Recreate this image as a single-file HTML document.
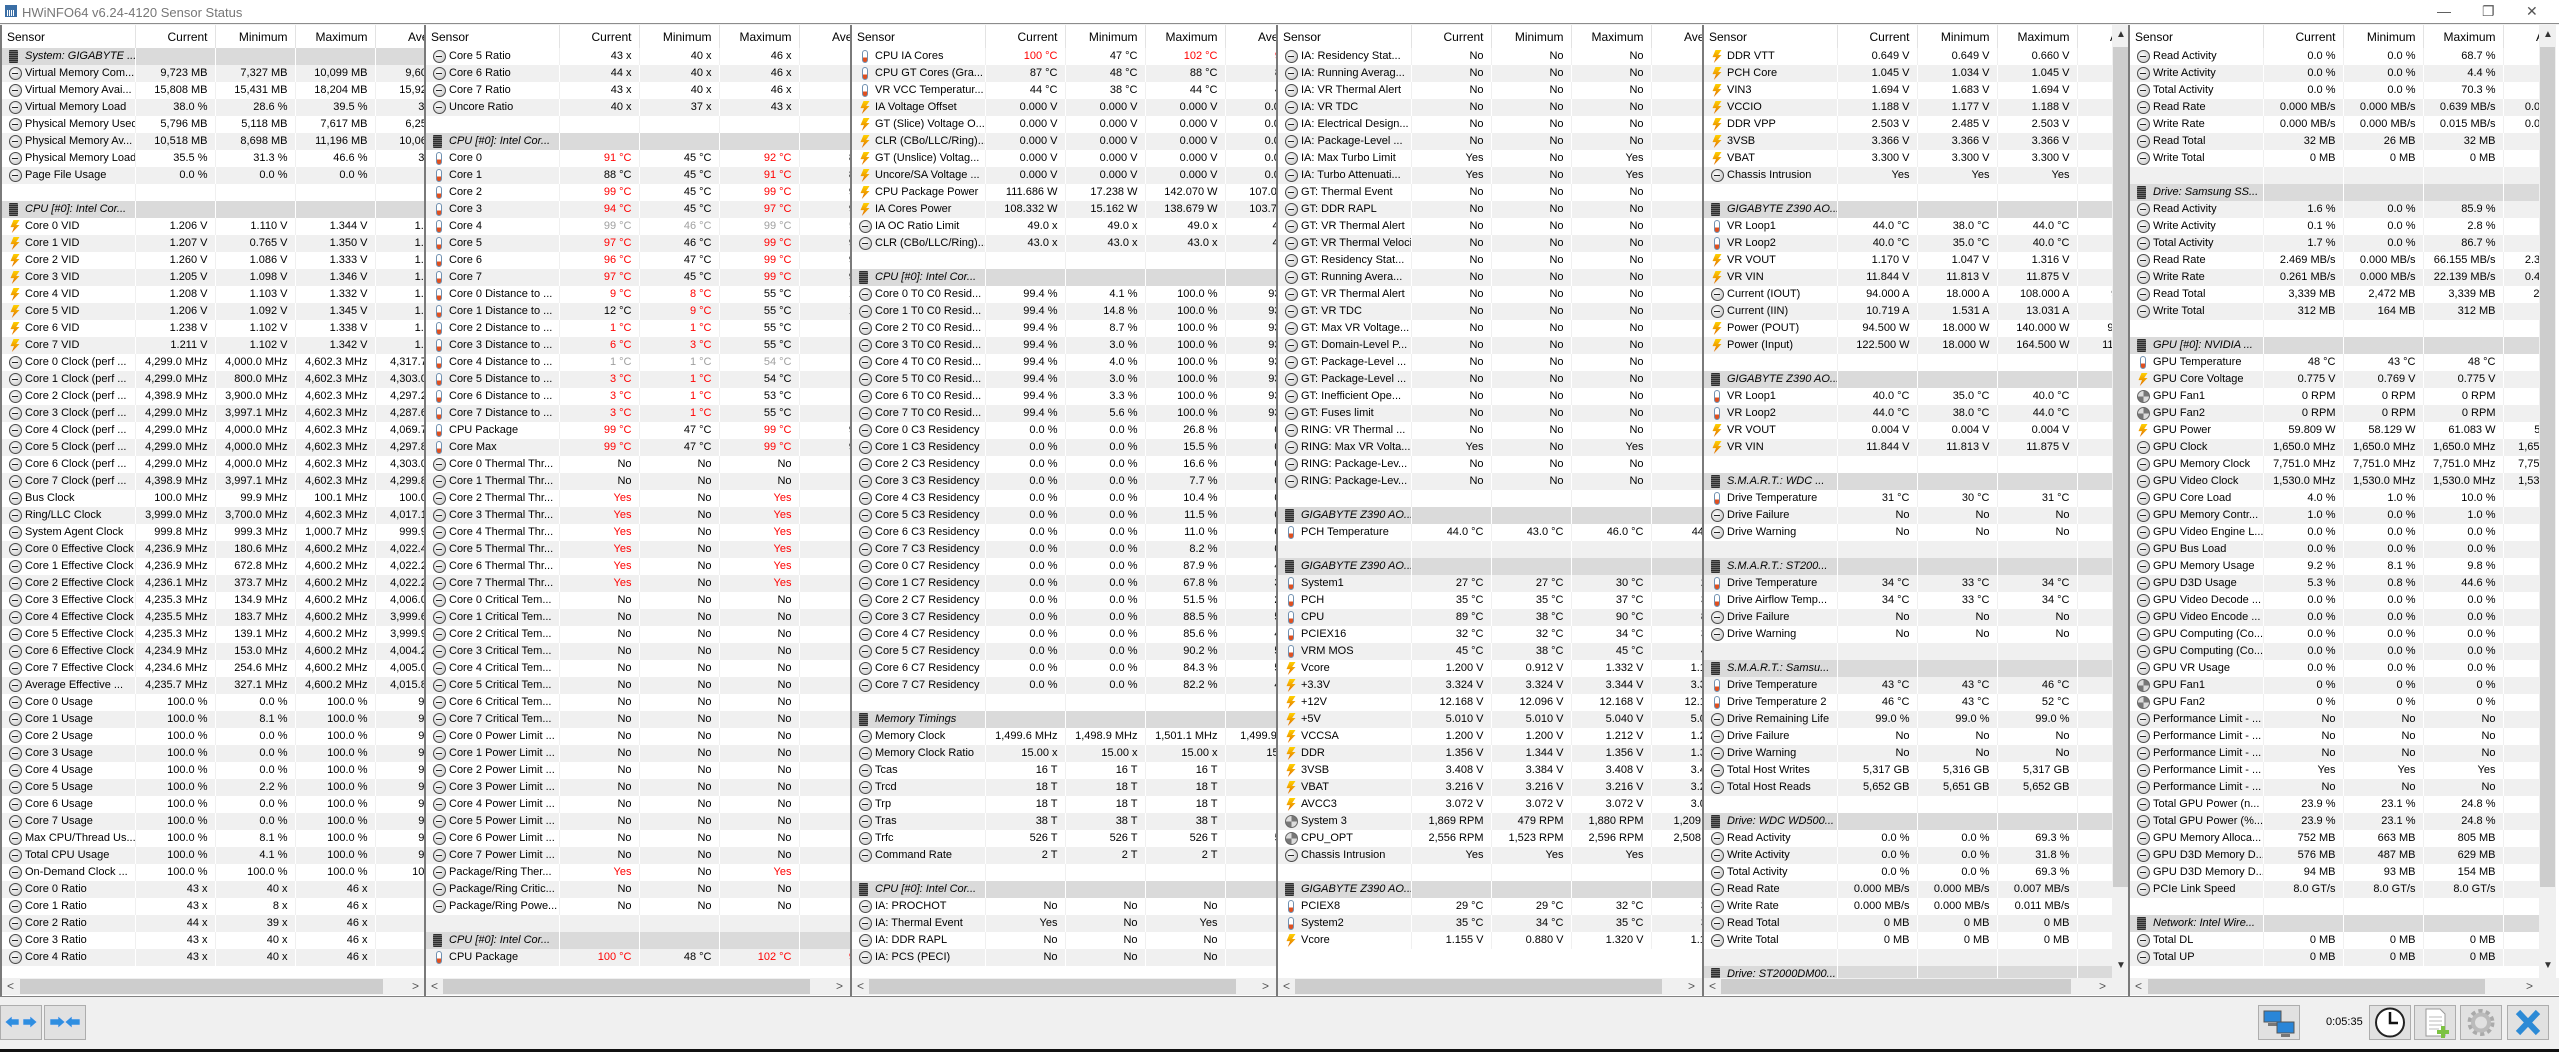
<!DOCTYPE html>
<html><head><meta charset="utf-8"><style>
*{margin:0;padding:0;box-sizing:border-box}
body{width:2559px;height:1052px;overflow:hidden;background:#f0f0f0;font-family:"Liberation Sans",Tahoma,sans-serif;font-size:11px;color:#000;position:relative}
.tb{position:absolute;left:0;top:0;width:2559px;height:24px;background:#fff;border-bottom:1px solid #8c8c8c}
.tb .ti{position:absolute;left:22px;top:5px;font-size:13px;color:#777}
.tb .ic{position:absolute;left:5px;top:5px;width:12px;height:12px;background:#3a6ea5}
.tb .ic:after{content:"";position:absolute;left:2px;top:5px;width:8px;height:6px;background:repeating-linear-gradient(90deg,#fff 0 1px,#3a6ea5 1px 2px)}
.wc{position:absolute;top:3px;font-size:14px;color:#555}
.pane{position:absolute;top:25px;height:971px;background:#fff;overflow:hidden;border-left:2px solid #7a7a7a}
.pane:first-of-type{border-left:0}
.cl{position:absolute;top:0;left:0;height:953px;overflow:hidden}
table{border-collapse:collapse;table-layout:fixed;width:458px}
col:nth-child(5){width:85px!important}
th{height:23px;font-weight:normal;text-align:right;padding-right:7px;border-right:1px solid #e3e3e3;white-space:nowrap;overflow:hidden;background:#fff;font-size:12px}
th:first-child{text-align:left;padding-left:5px}
td{height:17px;text-align:right;padding-right:7px;white-space:nowrap;overflow:hidden;border-right:1px solid #f0f0f0;line-height:17px}
td:first-child{text-align:left;padding-left:23px;position:relative;padding-right:0}
tbody tr:nth-child(even) td{background:#f0f0f0;border-right-color:#fff}
tr.h td{background:#dadada!important;border-right-color:#fff;font-style:italic}
td.r{color:#f00}td.d{color:#a0a0a0}
i{position:absolute;left:7px;top:2px;width:13px;height:13px;display:block}
i.c{border-radius:50%;border:1px solid #4a4a4a;background:radial-gradient(circle at 40% 40%,#fff,#bdbdbd)}
i.c:after{content:"";position:absolute;left:2px;top:5px;width:6px;height:1px;background:#222}
i.v{left:8px;width:10px;background:linear-gradient(#ffd200,#e06a00);clip-path:polygon(35% 0,95% 0,62% 38%,95% 38%,18% 100%,40% 55%,5% 55%)}
i.t{left:10px;width:6px;border:1px solid #7090b0;border-radius:3px;background:linear-gradient(to top,#e05020 40%,#fff 40%)}
i.h{left:7px;width:9px;background:repeating-linear-gradient(#2e2e2e 0 1px,#6a6a6a 1px 2px);border-radius:1px}
i.f{border-radius:50%;background:conic-gradient(#777 0 25%,#ddd 0 50%,#777 0 75%,#ddd 0);border:1px solid #666}
.hs{position:absolute;left:0;top:953px;height:17px;background:#f0f0f0}
.hs .th{position:absolute;top:1px;height:15px;background:#cdcdcd}
.hs .a{position:absolute;top:1px;font-size:12px;color:#555}
.vs{position:absolute;top:0;width:17px;height:953px;background:#f0f0f0}
.vs .th{position:absolute;left:1px;width:15px;top:22px;height:840px;background:#cdcdcd}
.vs .a{position:absolute;left:4px;font-size:10px;color:#333}
.bot{position:absolute;left:0;top:996px;width:2559px;height:53px;background:#f0f0f0;border-top:1px solid #828282}
.btn{position:absolute;top:8px;width:42px;height:35px;border:1px solid #adadad;background:#e1e1e1}
.blk{position:absolute;left:0;top:1049px;width:2559px;height:3px;background:#111}
</style></head><body>
<div class="tb"><div class="ic"></div><div class="ti">HWiNFO64 v6.24-4120 Sensor Status</div>
<div class="wc" style="left:2437px">—</div><div class="wc" style="left:2482px">❐</div><div class="wc" style="left:2526px">✕</div></div>

<!-- PANE 1 -->
<div class="pane" style="left:0;width:424px"><div class="cl" style="width:424px"><table><colgroup><col style="width:133px"><col style="width:80px"><col style="width:80px"><col style="width:80px"><col style="width:80px"></colgroup>
<thead><tr><th>Sensor<th>Current<th>Minimum<th>Maximum<th>Average</thead><tbody>
<tr class=h><td><i class=h></i>System: GIGABYTE ...<td><td><td><td>
<tr><td><i class=c></i>Virtual Memory Com...<td>9,723 MB<td>7,327 MB<td>10,099 MB<td>9,603 MB
<tr><td><i class=c></i>Virtual Memory Avai...<td>15,808 MB<td>15,431 MB<td>18,204 MB<td>15,928 MB
<tr><td><i class=c></i>Virtual Memory Load<td>38.0 %<td>28.6 %<td>39.5 %<td>37.3 %
<tr><td><i class=c></i>Physical Memory Used<td>5,796 MB<td>5,118 MB<td>7,617 MB<td>6,253 MB
<tr><td><i class=c></i>Physical Memory Av...<td>10,518 MB<td>8,698 MB<td>11,196 MB<td>10,061 MB
<tr><td><i class=c></i>Physical Memory Load<td>35.5 %<td>31.3 %<td>46.6 %<td>38.3 %
<tr><td><i class=c></i>Page File Usage<td>0.0 %<td>0.0 %<td>0.0 %<td>0.0 %
<tr><td>&nbsp;<td><td><td><td>
<tr class=h><td><i class=h></i>CPU [#0]: Intel Cor...<td><td><td><td>
<tr><td><i class=v></i>Core 0 VID<td>1.206 V<td>1.110 V<td>1.344 V<td>1.224 V
<tr><td><i class=v></i>Core 1 VID<td>1.207 V<td>0.765 V<td>1.350 V<td>1.221 V
<tr><td><i class=v></i>Core 2 VID<td>1.260 V<td>1.086 V<td>1.333 V<td>1.225 V
<tr><td><i class=v></i>Core 3 VID<td>1.205 V<td>1.098 V<td>1.346 V<td>1.221 V
<tr><td><i class=v></i>Core 4 VID<td>1.208 V<td>1.103 V<td>1.332 V<td>1.222 V
<tr><td><i class=v></i>Core 5 VID<td>1.206 V<td>1.092 V<td>1.345 V<td>1.222 V
<tr><td><i class=v></i>Core 6 VID<td>1.238 V<td>1.102 V<td>1.338 V<td>1.224 V
<tr><td><i class=v></i>Core 7 VID<td>1.211 V<td>1.102 V<td>1.342 V<td>1.223 V
<tr><td><i class=c></i>Core 0 Clock (perf ...<td>4,299.0 MHz<td>4,000.0 MHz<td>4,602.3 MHz<td>4,317.7 MHz
<tr><td><i class=c></i>Core 1 Clock (perf ...<td>4,299.0 MHz<td>800.0 MHz<td>4,602.3 MHz<td>4,303.0 MHz
<tr><td><i class=c></i>Core 2 Clock (perf ...<td>4,398.9 MHz<td>3,900.0 MHz<td>4,602.3 MHz<td>4,297.2 MHz
<tr><td><i class=c></i>Core 3 Clock (perf ...<td>4,299.0 MHz<td>3,997.1 MHz<td>4,602.3 MHz<td>4,287.6 MHz
<tr><td><i class=c></i>Core 4 Clock (perf ...<td>4,299.0 MHz<td>4,000.0 MHz<td>4,602.3 MHz<td>4,069.7 MHz
<tr><td><i class=c></i>Core 5 Clock (perf ...<td>4,299.0 MHz<td>4,000.0 MHz<td>4,602.3 MHz<td>4,297.8 MHz
<tr><td><i class=c></i>Core 6 Clock (perf ...<td>4,299.0 MHz<td>4,000.0 MHz<td>4,602.3 MHz<td>4,303.0 MHz
<tr><td><i class=c></i>Core 7 Clock (perf ...<td>4,398.9 MHz<td>3,997.1 MHz<td>4,602.3 MHz<td>4,299.8 MHz
<tr><td><i class=c></i>Bus Clock<td>100.0 MHz<td>99.9 MHz<td>100.1 MHz<td>100.0 MHz
<tr><td><i class=c></i>Ring/LLC Clock<td>3,999.0 MHz<td>3,700.0 MHz<td>4,602.3 MHz<td>4,017.1 MHz
<tr><td><i class=c></i>System Agent Clock<td>999.8 MHz<td>999.3 MHz<td>1,000.7 MHz<td>999.9 MHz
<tr><td><i class=c></i>Core 0 Effective Clock<td>4,236.9 MHz<td>180.6 MHz<td>4,600.2 MHz<td>4,022.4 MHz
<tr><td><i class=c></i>Core 1 Effective Clock<td>4,236.9 MHz<td>672.8 MHz<td>4,600.2 MHz<td>4,022.2 MHz
<tr><td><i class=c></i>Core 2 Effective Clock<td>4,236.1 MHz<td>373.7 MHz<td>4,600.2 MHz<td>4,022.2 MHz
<tr><td><i class=c></i>Core 3 Effective Clock<td>4,235.3 MHz<td>134.9 MHz<td>4,600.2 MHz<td>4,006.0 MHz
<tr><td><i class=c></i>Core 4 Effective Clock<td>4,235.5 MHz<td>183.7 MHz<td>4,600.2 MHz<td>3,999.6 MHz
<tr><td><i class=c></i>Core 5 Effective Clock<td>4,235.3 MHz<td>139.1 MHz<td>4,600.2 MHz<td>3,999.9 MHz
<tr><td><i class=c></i>Core 6 Effective Clock<td>4,234.9 MHz<td>153.0 MHz<td>4,600.2 MHz<td>4,004.2 MHz
<tr><td><i class=c></i>Core 7 Effective Clock<td>4,234.6 MHz<td>254.6 MHz<td>4,600.2 MHz<td>4,005.0 MHz
<tr><td><i class=c></i>Average Effective ...<td>4,235.7 MHz<td>327.1 MHz<td>4,600.2 MHz<td>4,015.8 MHz
<tr><td><i class=c></i>Core 0 Usage<td>100.0 %<td>0.0 %<td>100.0 %<td>95.1 %
<tr><td><i class=c></i>Core 1 Usage<td>100.0 %<td>8.1 %<td>100.0 %<td>95.0 %
<tr><td><i class=c></i>Core 2 Usage<td>100.0 %<td>0.0 %<td>100.0 %<td>93.8 %
<tr><td><i class=c></i>Core 3 Usage<td>100.0 %<td>0.0 %<td>100.0 %<td>94.0 %
<tr><td><i class=c></i>Core 4 Usage<td>100.0 %<td>0.0 %<td>100.0 %<td>93.5 %
<tr><td><i class=c></i>Core 5 Usage<td>100.0 %<td>2.2 %<td>100.0 %<td>93.6 %
<tr><td><i class=c></i>Core 6 Usage<td>100.0 %<td>0.0 %<td>100.0 %<td>94.0 %
<tr><td><i class=c></i>Core 7 Usage<td>100.0 %<td>0.0 %<td>100.0 %<td>94.1 %
<tr><td><i class=c></i>Max CPU/Thread Us...<td>100.0 %<td>8.1 %<td>100.0 %<td>95.9 %
<tr><td><i class=c></i>Total CPU Usage<td>100.0 %<td>4.1 %<td>100.0 %<td>94.0 %
<tr><td><i class=c></i>On-Demand Clock ...<td>100.0 %<td>100.0 %<td>100.0 %<td>100.0 %
<tr><td><i class=c></i>Core 0 Ratio<td>43 x<td>40 x<td>46 x<td>
<tr><td><i class=c></i>Core 1 Ratio<td>43 x<td>8 x<td>46 x<td>
<tr><td><i class=c></i>Core 2 Ratio<td>44 x<td>39 x<td>46 x<td>
<tr><td><i class=c></i>Core 3 Ratio<td>43 x<td>40 x<td>46 x<td>
<tr><td><i class=c></i>Core 4 Ratio<td>43 x<td>40 x<td>46 x<td>
</tbody></table></div>
<div class="hs" style="width:424px"><span class="a" style="left:5px">&lt;</span><div class="th" style="left:18px;width:363px"></div><span class="a" style="left:410px">&gt;</span></div></div>

<!-- PANE 2 -->
<div class="pane" style="left:424px;width:426px"><div class="cl" style="width:424px"><table><colgroup><col style="width:133px"><col style="width:80px"><col style="width:80px"><col style="width:80px"><col style="width:80px"></colgroup>
<thead><tr><th>Sensor<th>Current<th>Minimum<th>Maximum<th>Average</thead><tbody>
<tr><td><i class=c></i>Core 5 Ratio<td>43 x<td>40 x<td>46 x<td>
<tr><td><i class=c></i>Core 6 Ratio<td>44 x<td>40 x<td>46 x<td>
<tr><td><i class=c></i>Core 7 Ratio<td>43 x<td>40 x<td>46 x<td>
<tr><td><i class=c></i>Uncore Ratio<td>40 x<td>37 x<td>43 x<td>
<tr><td>&nbsp;<td><td><td><td>
<tr class=h><td><i class=h></i>CPU [#0]: Intel Cor...<td><td><td><td>
<tr><td><i class=t></i>Core 0<td class=r>91 °C<td>45 °C<td class=r>92 °C<td>87 °C
<tr><td><i class=t></i>Core 1<td>88 °C<td>45 °C<td class=r>91 °C<td>85 °C
<tr><td><i class=t></i>Core 2<td class=r>99 °C<td>45 °C<td class=r>99 °C<td>95 °C
<tr><td><i class=t></i>Core 3<td class=r>94 °C<td>45 °C<td class=r>97 °C<td>91 °C
<tr><td><i class=t></i>Core 4<td class=d>99 °C<td class=d>46 °C<td class=d>99 °C<td class=d>95 °C
<tr><td><i class=t></i>Core 5<td class=r>97 °C<td>46 °C<td class=r>99 °C<td>94 °C
<tr><td><i class=t></i>Core 6<td class=r>96 °C<td>47 °C<td class=r>99 °C<td>93 °C
<tr><td><i class=t></i>Core 7<td class=r>97 °C<td>45 °C<td class=r>99 °C<td>94 °C
<tr><td><i class=t></i>Core 0 Distance to ...<td class=r>9 °C<td class=r>8 °C<td>55 °C<td>13 °C
<tr><td><i class=t></i>Core 1 Distance to ...<td>12 °C<td class=r>9 °C<td>55 °C<td>15 °C
<tr><td><i class=t></i>Core 2 Distance to ...<td class=r>1 °C<td class=r>1 °C<td>55 °C<td>5 °C
<tr><td><i class=t></i>Core 3 Distance to ...<td class=r>6 °C<td class=r>3 °C<td>55 °C<td>9 °C
<tr><td><i class=t></i>Core 4 Distance to ...<td class=d>1 °C<td class=d>1 °C<td class=d>54 °C<td class=d>5 °C
<tr><td><i class=t></i>Core 5 Distance to ...<td class=r>3 °C<td class=r>1 °C<td>54 °C<td>6 °C
<tr><td><i class=t></i>Core 6 Distance to ...<td class=r>3 °C<td class=r>1 °C<td>53 °C<td>7 °C
<tr><td><i class=t></i>Core 7 Distance to ...<td class=r>3 °C<td class=r>1 °C<td>55 °C<td>6 °C
<tr><td><i class=t></i>CPU Package<td class=r>99 °C<td>47 °C<td class=r>99 °C<td>95 °C
<tr><td><i class=t></i>Core Max<td class=r>99 °C<td>47 °C<td class=r>99 °C<td>95 °C
<tr><td><i class=c></i>Core 0 Thermal Thr...<td>No<td>No<td>No<td>
<tr><td><i class=c></i>Core 1 Thermal Thr...<td>No<td>No<td>No<td>
<tr><td><i class=c></i>Core 2 Thermal Thr...<td class=r>Yes<td>No<td class=r>Yes<td>
<tr><td><i class=c></i>Core 3 Thermal Thr...<td class=r>Yes<td>No<td class=r>Yes<td>
<tr><td><i class=c></i>Core 4 Thermal Thr...<td class=r>Yes<td>No<td class=r>Yes<td>
<tr><td><i class=c></i>Core 5 Thermal Thr...<td class=r>Yes<td>No<td class=r>Yes<td>
<tr><td><i class=c></i>Core 6 Thermal Thr...<td class=r>Yes<td>No<td class=r>Yes<td>
<tr><td><i class=c></i>Core 7 Thermal Thr...<td class=r>Yes<td>No<td class=r>Yes<td>
<tr><td><i class=c></i>Core 0 Critical Tem...<td>No<td>No<td>No<td>
<tr><td><i class=c></i>Core 1 Critical Tem...<td>No<td>No<td>No<td>
<tr><td><i class=c></i>Core 2 Critical Tem...<td>No<td>No<td>No<td>
<tr><td><i class=c></i>Core 3 Critical Tem...<td>No<td>No<td>No<td>
<tr><td><i class=c></i>Core 4 Critical Tem...<td>No<td>No<td>No<td>
<tr><td><i class=c></i>Core 5 Critical Tem...<td>No<td>No<td>No<td>
<tr><td><i class=c></i>Core 6 Critical Tem...<td>No<td>No<td>No<td>
<tr><td><i class=c></i>Core 7 Critical Tem...<td>No<td>No<td>No<td>
<tr><td><i class=c></i>Core 0 Power Limit ...<td>No<td>No<td>No<td>
<tr><td><i class=c></i>Core 1 Power Limit ...<td>No<td>No<td>No<td>
<tr><td><i class=c></i>Core 2 Power Limit ...<td>No<td>No<td>No<td>
<tr><td><i class=c></i>Core 3 Power Limit ...<td>No<td>No<td>No<td>
<tr><td><i class=c></i>Core 4 Power Limit ...<td>No<td>No<td>No<td>
<tr><td><i class=c></i>Core 5 Power Limit ...<td>No<td>No<td>No<td>
<tr><td><i class=c></i>Core 6 Power Limit ...<td>No<td>No<td>No<td>
<tr><td><i class=c></i>Core 7 Power Limit ...<td>No<td>No<td>No<td>
<tr><td><i class=c></i>Package/Ring Ther...<td class=r>Yes<td>No<td class=r>Yes<td>
<tr><td><i class=c></i>Package/Ring Critic...<td>No<td>No<td>No<td>
<tr><td><i class=c></i>Package/Ring Powe...<td>No<td>No<td>No<td>
<tr><td>&nbsp;<td><td><td><td>
<tr class=h><td><i class=h></i>CPU [#0]: Intel Cor...<td><td><td><td>
<tr><td><i class=t></i>CPU Package<td class=r>100 °C<td>48 °C<td class=r>102 °C<td class=r>96 °C
</tbody></table></div>
<div class="hs" style="width:424px"><span class="a" style="left:5px">&lt;</span><div class="th" style="left:17px;width:367px"></div><span class="a" style="left:410px">&gt;</span></div></div>

<!-- PANE 3 -->
<div class="pane" style="left:850px;width:426px"><div class="cl" style="width:424px"><table><colgroup><col style="width:133px"><col style="width:80px"><col style="width:80px"><col style="width:80px"><col style="width:80px"></colgroup>
<thead><tr><th>Sensor<th>Current<th>Minimum<th>Maximum<th>Average</thead><tbody>
<tr><td><i class=t></i>CPU IA Cores<td class=r>100 °C<td>47 °C<td class=r>102 °C<td class=r>96 °C
<tr><td><i class=t></i>CPU GT Cores (Gra...<td>87 °C<td>48 °C<td>88 °C<td>84 °C
<tr><td><i class=t></i>VR VCC Temperatur...<td>44 °C<td>38 °C<td>44 °C<td>42 °C
<tr><td><i class=v></i>IA Voltage Offset<td>0.000 V<td>0.000 V<td>0.000 V<td>0.000 V
<tr><td><i class=v></i>GT (Slice) Voltage O...<td>0.000 V<td>0.000 V<td>0.000 V<td>0.000 V
<tr><td><i class=v></i>CLR (CBo/LLC/Ring)...<td>0.000 V<td>0.000 V<td>0.000 V<td>0.000 V
<tr><td><i class=v></i>GT (Unslice) Voltag...<td>0.000 V<td>0.000 V<td>0.000 V<td>0.000 V
<tr><td><i class=v></i>Uncore/SA Voltage ...<td>0.000 V<td>0.000 V<td>0.000 V<td>0.000 V
<tr><td><i class=v></i>CPU Package Power<td>111.686 W<td>17.238 W<td>142.070 W<td>107.031 W
<tr><td><i class=v></i>IA Cores Power<td>108.332 W<td>15.162 W<td>138.679 W<td>103.725 W
<tr><td><i class=c></i>IA OC Ratio Limit<td>49.0 x<td>49.0 x<td>49.0 x<td>49.0 x
<tr><td><i class=c></i>CLR (CBo/LLC/Ring)...<td>43.0 x<td>43.0 x<td>43.0 x<td>43.0 x
<tr><td>&nbsp;<td><td><td><td>
<tr class=h><td><i class=h></i>CPU [#0]: Intel Cor...<td><td><td><td>
<tr><td><i class=c></i>Core 0 T0 C0 Resid...<td>99.4 %<td>4.1 %<td>100.0 %<td>93.8 %
<tr><td><i class=c></i>Core 1 T0 C0 Resid...<td>99.4 %<td>14.8 %<td>100.0 %<td>93.7 %
<tr><td><i class=c></i>Core 2 T0 C0 Resid...<td>99.4 %<td>8.7 %<td>100.0 %<td>93.5 %
<tr><td><i class=c></i>Core 3 T0 C0 Resid...<td>99.4 %<td>3.0 %<td>100.0 %<td>93.2 %
<tr><td><i class=c></i>Core 4 T0 C0 Resid...<td>99.4 %<td>4.0 %<td>100.0 %<td>93.1 %
<tr><td><i class=c></i>Core 5 T0 C0 Resid...<td>99.4 %<td>3.0 %<td>100.0 %<td>93.2 %
<tr><td><i class=c></i>Core 6 T0 C0 Resid...<td>99.4 %<td>3.3 %<td>100.0 %<td>93.4 %
<tr><td><i class=c></i>Core 7 T0 C0 Resid...<td>99.4 %<td>5.6 %<td>100.0 %<td>93.4 %
<tr><td><i class=c></i>Core 0 C3 Residency<td>0.0 %<td>0.0 %<td>26.8 %<td>0.6 %
<tr><td><i class=c></i>Core 1 C3 Residency<td>0.0 %<td>0.0 %<td>15.5 %<td>0.5 %
<tr><td><i class=c></i>Core 2 C3 Residency<td>0.0 %<td>0.0 %<td>16.6 %<td>0.5 %
<tr><td><i class=c></i>Core 3 C3 Residency<td>0.0 %<td>0.0 %<td>7.7 %<td>0.3 %
<tr><td><i class=c></i>Core 4 C3 Residency<td>0.0 %<td>0.0 %<td>10.4 %<td>0.4 %
<tr><td><i class=c></i>Core 5 C3 Residency<td>0.0 %<td>0.0 %<td>11.5 %<td>0.4 %
<tr><td><i class=c></i>Core 6 C3 Residency<td>0.0 %<td>0.0 %<td>11.0 %<td>0.4 %
<tr><td><i class=c></i>Core 7 C3 Residency<td>0.0 %<td>0.0 %<td>8.2 %<td>0.3 %
<tr><td><i class=c></i>Core 0 C7 Residency<td>0.0 %<td>0.0 %<td>87.9 %<td>4.6 %
<tr><td><i class=c></i>Core 1 C7 Residency<td>0.0 %<td>0.0 %<td>67.8 %<td>3.6 %
<tr><td><i class=c></i>Core 2 C7 Residency<td>0.0 %<td>0.0 %<td>51.5 %<td>2.9 %
<tr><td><i class=c></i>Core 3 C7 Residency<td>0.0 %<td>0.0 %<td>88.5 %<td>5.4 %
<tr><td><i class=c></i>Core 4 C7 Residency<td>0.0 %<td>0.0 %<td>85.6 %<td>4.9 %
<tr><td><i class=c></i>Core 5 C7 Residency<td>0.0 %<td>0.0 %<td>90.2 %<td>5.5 %
<tr><td><i class=c></i>Core 6 C7 Residency<td>0.0 %<td>0.0 %<td>84.3 %<td>5.1 %
<tr><td><i class=c></i>Core 7 C7 Residency<td>0.0 %<td>0.0 %<td>82.2 %<td>4.8 %
<tr><td>&nbsp;<td><td><td><td>
<tr class=h><td><i class=h></i>Memory Timings<td><td><td><td>
<tr><td><i class=c></i>Memory Clock<td>1,499.6 MHz<td>1,498.9 MHz<td>1,501.1 MHz<td>1,499.9 MHz
<tr><td><i class=c></i>Memory Clock Ratio<td>15.00 x<td>15.00 x<td>15.00 x<td>15.00 x
<tr><td><i class=c></i>Tcas<td>16 T<td>16 T<td>16 T<td>16 T
<tr><td><i class=c></i>Trcd<td>18 T<td>18 T<td>18 T<td>18 T
<tr><td><i class=c></i>Trp<td>18 T<td>18 T<td>18 T<td>18 T
<tr><td><i class=c></i>Tras<td>38 T<td>38 T<td>38 T<td>38 T
<tr><td><i class=c></i>Trfc<td>526 T<td>526 T<td>526 T<td>526 T
<tr><td><i class=c></i>Command Rate<td>2 T<td>2 T<td>2 T<td>2 T
<tr><td>&nbsp;<td><td><td><td>
<tr class=h><td><i class=h></i>CPU [#0]: Intel Cor...<td><td><td><td>
<tr><td><i class=c></i>IA: PROCHOT<td>No<td>No<td>No<td>
<tr><td><i class=c></i>IA: Thermal Event<td>Yes<td>No<td>Yes<td>
<tr><td><i class=c></i>IA: DDR RAPL<td>No<td>No<td>No<td>
<tr><td><i class=c></i>IA: PCS (PECI)<td>No<td>No<td>No<td>
</tbody></table></div>
<div class="hs" style="width:424px"><span class="a" style="left:5px">&lt;</span><div class="th" style="left:17px;width:367px"></div><span class="a" style="left:410px">&gt;</span></div></div>

<!-- PANE 4 -->
<div class="pane" style="left:1276px;width:426px"><div class="cl" style="width:424px"><table><colgroup><col style="width:133px"><col style="width:80px"><col style="width:80px"><col style="width:80px"><col style="width:80px"></colgroup>
<thead><tr><th>Sensor<th>Current<th>Minimum<th>Maximum<th>Average</thead><tbody>
<tr><td><i class=c></i>IA: Residency Stat...<td>No<td>No<td>No<td>
<tr><td><i class=c></i>IA: Running Averag...<td>No<td>No<td>No<td>
<tr><td><i class=c></i>IA: VR Thermal Alert<td>No<td>No<td>No<td>
<tr><td><i class=c></i>IA: VR TDC<td>No<td>No<td>No<td>
<tr><td><i class=c></i>IA: Electrical Design...<td>No<td>No<td>No<td>
<tr><td><i class=c></i>IA: Package-Level ...<td>No<td>No<td>No<td>
<tr><td><i class=c></i>IA: Max Turbo Limit<td>Yes<td>No<td>Yes<td>
<tr><td><i class=c></i>IA: Turbo Attenuati...<td>Yes<td>No<td>Yes<td>
<tr><td><i class=c></i>GT: Thermal Event<td>No<td>No<td>No<td>
<tr><td><i class=c></i>GT: DDR RAPL<td>No<td>No<td>No<td>
<tr><td><i class=c></i>GT: VR Thermal Alert<td>No<td>No<td>No<td>
<tr><td><i class=c></i>GT: VR Thermal Velocit...<td>No<td>No<td>No<td>
<tr><td><i class=c></i>GT: Residency Stat...<td>No<td>No<td>No<td>
<tr><td><i class=c></i>GT: Running Avera...<td>No<td>No<td>No<td>
<tr><td><i class=c></i>GT: VR Thermal Alert<td>No<td>No<td>No<td>
<tr><td><i class=c></i>GT: VR TDC<td>No<td>No<td>No<td>
<tr><td><i class=c></i>GT: Max VR Voltage...<td>No<td>No<td>No<td>
<tr><td><i class=c></i>GT: Domain-Level P...<td>No<td>No<td>No<td>
<tr><td><i class=c></i>GT: Package-Level ...<td>No<td>No<td>No<td>
<tr><td><i class=c></i>GT: Package-Level ...<td>No<td>No<td>No<td>
<tr><td><i class=c></i>GT: Inefficient Ope...<td>No<td>No<td>No<td>
<tr><td><i class=c></i>GT: Fuses limit<td>No<td>No<td>No<td>
<tr><td><i class=c></i>RING: VR Thermal ...<td>No<td>No<td>No<td>
<tr><td><i class=c></i>RING: Max VR Volta...<td>Yes<td>No<td>Yes<td>
<tr><td><i class=c></i>RING: Package-Lev...<td>No<td>No<td>No<td>
<tr><td><i class=c></i>RING: Package-Lev...<td>No<td>No<td>No<td>
<tr><td>&nbsp;<td><td><td><td>
<tr class=h><td><i class=h></i>GIGABYTE Z390 AO...<td><td><td><td>
<tr><td><i class=t></i>PCH Temperature<td>44.0 °C<td>43.0 °C<td>46.0 °C<td>44.6 °C
<tr><td>&nbsp;<td><td><td><td>
<tr class=h><td><i class=h></i>GIGABYTE Z390 AO...<td><td><td><td>
<tr><td><i class=t></i>System1<td>27 °C<td>27 °C<td>30 °C<td>28 °C
<tr><td><i class=t></i>PCH<td>35 °C<td>35 °C<td>37 °C<td>36 °C
<tr><td><i class=t></i>CPU<td>89 °C<td>38 °C<td>90 °C<td>86 °C
<tr><td><i class=t></i>PCIEX16<td>32 °C<td>32 °C<td>34 °C<td>33 °C
<tr><td><i class=t></i>VRM MOS<td>45 °C<td>38 °C<td>45 °C<td>43 °C
<tr><td><i class=v></i>Vcore<td>1.200 V<td>0.912 V<td>1.332 V<td>1.190 V
<tr><td><i class=v></i>+3.3V<td>3.324 V<td>3.324 V<td>3.344 V<td>3.331 V
<tr><td><i class=v></i>+12V<td>12.168 V<td>12.096 V<td>12.168 V<td>12.144 V
<tr><td><i class=v></i>+5V<td>5.010 V<td>5.010 V<td>5.040 V<td>5.021 V
<tr><td><i class=v></i>VCCSA<td>1.200 V<td>1.200 V<td>1.212 V<td>1.203 V
<tr><td><i class=v></i>DDR<td>1.356 V<td>1.344 V<td>1.356 V<td>1.355 V
<tr><td><i class=v></i>3VSB<td>3.408 V<td>3.384 V<td>3.408 V<td>3.405 V
<tr><td><i class=v></i>VBAT<td>3.216 V<td>3.216 V<td>3.216 V<td>3.216 V
<tr><td><i class=v></i>AVCC3<td>3.072 V<td>3.072 V<td>3.072 V<td>3.072 V
<tr><td><i class=f></i>System 3<td>1,869 RPM<td>479 RPM<td>1,880 RPM<td>1,209 RPM
<tr><td><i class=f></i>CPU_OPT<td>2,556 RPM<td>1,523 RPM<td>2,596 RPM<td>2,508 RPM
<tr><td><i class=c></i>Chassis Intrusion<td>Yes<td>Yes<td>Yes<td>
<tr><td>&nbsp;<td><td><td><td>
<tr class=h><td><i class=h></i>GIGABYTE Z390 AO...<td><td><td><td>
<tr><td><i class=t></i>PCIEX8<td>29 °C<td>29 °C<td>32 °C<td>30 °C
<tr><td><i class=t></i>System2<td>35 °C<td>34 °C<td>35 °C<td>35 °C
<tr><td><i class=v></i>Vcore<td>1.155 V<td>0.880 V<td>1.320 V<td>1.161 V
</tbody></table></div>
<div class="hs" style="width:424px"><span class="a" style="left:5px">&lt;</span><div class="th" style="left:17px;width:367px"></div><span class="a" style="left:410px">&gt;</span></div></div>

<!-- PANE 5 -->
<div class="pane" style="left:1702px;width:426px"><div class="cl" style="width:408px"><table><colgroup><col style="width:133px"><col style="width:80px"><col style="width:80px"><col style="width:80px"><col style="width:80px"></colgroup>
<thead><tr><th>Sensor<th>Current<th>Minimum<th>Maximum<th>Average</thead><tbody>
<tr><td><i class=v></i>DDR VTT<td>0.649 V<td>0.649 V<td>0.660 V<td>0.650 V
<tr><td><i class=v></i>PCH Core<td>1.045 V<td>1.034 V<td>1.045 V<td>1.044 V
<tr><td><i class=v></i>VIN3<td>1.694 V<td>1.683 V<td>1.694 V<td>1.693 V
<tr><td><i class=v></i>VCCIO<td>1.188 V<td>1.177 V<td>1.188 V<td>1.187 V
<tr><td><i class=v></i>DDR VPP<td>2.503 V<td>2.485 V<td>2.503 V<td>2.500 V
<tr><td><i class=v></i>3VSB<td>3.366 V<td>3.366 V<td>3.366 V<td>3.366 V
<tr><td><i class=v></i>VBAT<td>3.300 V<td>3.300 V<td>3.300 V<td>3.300 V
<tr><td><i class=c></i>Chassis Intrusion<td>Yes<td>Yes<td>Yes<td>
<tr><td>&nbsp;<td><td><td><td>
<tr class=h><td><i class=h></i>GIGABYTE Z390 AO...<td><td><td><td>
<tr><td><i class=t></i>VR Loop1<td>44.0 °C<td>38.0 °C<td>44.0 °C<td>42.0 °C
<tr><td><i class=t></i>VR Loop2<td>40.0 °C<td>35.0 °C<td>40.0 °C<td>38.0 °C
<tr><td><i class=v></i>VR VOUT<td>1.170 V<td>1.047 V<td>1.316 V<td>1.171 V
<tr><td><i class=v></i>VR VIN<td>11.844 V<td>11.813 V<td>11.875 V<td>11.840 V
<tr><td><i class=c></i>Current (IOUT)<td>94.000 A<td>18.000 A<td>108.000 A<td>91.000 A
<tr><td><i class=c></i>Current (IIN)<td>10.719 A<td>1.531 A<td>13.031 A<td>10.311 A
<tr><td><i class=v></i>Power (POUT)<td>94.500 W<td>18.000 W<td>140.000 W<td>98.000 W
<tr><td><i class=v></i>Power (Input)<td>122.500 W<td>18.000 W<td>164.500 W<td>117.000 W
<tr><td>&nbsp;<td><td><td><td>
<tr class=h><td><i class=h></i>GIGABYTE Z390 AO...<td><td><td><td>
<tr><td><i class=t></i>VR Loop1<td>40.0 °C<td>35.0 °C<td>40.0 °C<td>38.0 °C
<tr><td><i class=t></i>VR Loop2<td>44.0 °C<td>38.0 °C<td>44.0 °C<td>42.0 °C
<tr><td><i class=v></i>VR VOUT<td>0.004 V<td>0.004 V<td>0.004 V<td>0.004 V
<tr><td><i class=v></i>VR VIN<td>11.844 V<td>11.813 V<td>11.875 V<td>11.840 V
<tr><td>&nbsp;<td><td><td><td>
<tr class=h><td><i class=h></i>S.M.A.R.T.: WDC ...<td><td><td><td>
<tr><td><i class=t></i>Drive Temperature<td>31 °C<td>30 °C<td>31 °C<td>31 °C
<tr><td><i class=c></i>Drive Failure<td>No<td>No<td>No<td>
<tr><td><i class=c></i>Drive Warning<td>No<td>No<td>No<td>
<tr><td>&nbsp;<td><td><td><td>
<tr class=h><td><i class=h></i>S.M.A.R.T.: ST200...<td><td><td><td>
<tr><td><i class=t></i>Drive Temperature<td>34 °C<td>33 °C<td>34 °C<td>34 °C
<tr><td><i class=t></i>Drive Airflow Temp...<td>34 °C<td>33 °C<td>34 °C<td>34 °C
<tr><td><i class=c></i>Drive Failure<td>No<td>No<td>No<td>
<tr><td><i class=c></i>Drive Warning<td>No<td>No<td>No<td>
<tr><td>&nbsp;<td><td><td><td>
<tr class=h><td><i class=h></i>S.M.A.R.T.: Samsu...<td><td><td><td>
<tr><td><i class=t></i>Drive Temperature<td>43 °C<td>43 °C<td>46 °C<td>44 °C
<tr><td><i class=t></i>Drive Temperature 2<td>46 °C<td>43 °C<td>52 °C<td>47 °C
<tr><td><i class=c></i>Drive Remaining Life<td>99.0 %<td>99.0 %<td>99.0 %<td>
<tr><td><i class=c></i>Drive Failure<td>No<td>No<td>No<td>
<tr><td><i class=c></i>Drive Warning<td>No<td>No<td>No<td>
<tr><td><i class=c></i>Total Host Writes<td>5,317 GB<td>5,316 GB<td>5,317 GB<td>
<tr><td><i class=c></i>Total Host Reads<td>5,652 GB<td>5,651 GB<td>5,652 GB<td>
<tr><td>&nbsp;<td><td><td><td>
<tr class=h><td><i class=h></i>Drive: WDC WD500...<td><td><td><td>
<tr><td><i class=c></i>Read Activity<td>0.0 %<td>0.0 %<td>69.3 %<td>
<tr><td><i class=c></i>Write Activity<td>0.0 %<td>0.0 %<td>31.8 %<td>
<tr><td><i class=c></i>Total Activity<td>0.0 %<td>0.0 %<td>69.3 %<td>
<tr><td><i class=c></i>Read Rate<td>0.000 MB/s<td>0.000 MB/s<td>0.007 MB/s<td>
<tr><td><i class=c></i>Write Rate<td>0.000 MB/s<td>0.000 MB/s<td>0.011 MB/s<td>
<tr><td><i class=c></i>Read Total<td>0 MB<td>0 MB<td>0 MB<td>
<tr><td><i class=c></i>Write Total<td>0 MB<td>0 MB<td>0 MB<td>
<tr><td>&nbsp;<td><td><td><td>
<tr class=h><td><i class=h></i>Drive: ST2000DM00...<td><td><td><td>
</tbody></table></div>
<div class="vs" style="left:408px"><span class="a" style="top:4px">▲</span><div class="th"></div><span class="a" style="top:935px">▼</span></div>
<div class="hs" style="width:424px"><span class="a" style="left:5px">&lt;</span><div class="th" style="left:17px;width:350px"></div><span class="a" style="left:395px">&gt;</span></div></div>

<!-- PANE 6 -->
<div class="pane" style="left:2128px;width:431px"><div class="cl" style="width:409px"><table><colgroup><col style="width:133px"><col style="width:80px"><col style="width:80px"><col style="width:80px"><col style="width:80px"></colgroup>
<thead><tr><th>Sensor<th>Current<th>Minimum<th>Maximum<th>Average</thead><tbody>
<tr><td><i class=c></i>Read Activity<td>0.0 %<td>0.0 %<td>68.7 %<td>
<tr><td><i class=c></i>Write Activity<td>0.0 %<td>0.0 %<td>4.4 %<td>
<tr><td><i class=c></i>Total Activity<td>0.0 %<td>0.0 %<td>70.3 %<td>
<tr><td><i class=c></i>Read Rate<td>0.000 MB/s<td>0.000 MB/s<td>0.639 MB/s<td>0.004 MB/s
<tr><td><i class=c></i>Write Rate<td>0.000 MB/s<td>0.000 MB/s<td>0.015 MB/s<td>0.000 MB/s
<tr><td><i class=c></i>Read Total<td>32 MB<td>26 MB<td>32 MB<td>
<tr><td><i class=c></i>Write Total<td>0 MB<td>0 MB<td>0 MB<td>
<tr><td>&nbsp;<td><td><td><td>
<tr class=h><td><i class=h></i>Drive: Samsung SS...<td><td><td><td>
<tr><td><i class=c></i>Read Activity<td>1.6 %<td>0.0 %<td>85.9 %<td>
<tr><td><i class=c></i>Write Activity<td>0.1 %<td>0.0 %<td>2.8 %<td>
<tr><td><i class=c></i>Total Activity<td>1.7 %<td>0.0 %<td>86.7 %<td>
<tr><td><i class=c></i>Read Rate<td>2.469 MB/s<td>0.000 MB/s<td>66.155 MB/s<td>2.301 MB/s
<tr><td><i class=c></i>Write Rate<td>0.261 MB/s<td>0.000 MB/s<td>22.139 MB/s<td>0.412 MB/s
<tr><td><i class=c></i>Read Total<td>3,339 MB<td>2,472 MB<td>3,339 MB<td>2,903 MB
<tr><td><i class=c></i>Write Total<td>312 MB<td>164 MB<td>312 MB<td>234 MB
<tr><td>&nbsp;<td><td><td><td>
<tr class=h><td><i class=h></i>GPU [#0]: NVIDIA ...<td><td><td><td>
<tr><td><i class=t></i>GPU Temperature<td>48 °C<td>43 °C<td>48 °C<td>
<tr><td><i class=v></i>GPU Core Voltage<td>0.775 V<td>0.769 V<td>0.775 V<td>
<tr><td><i class=f></i>GPU Fan1<td>0 RPM<td>0 RPM<td>0 RPM<td>
<tr><td><i class=f></i>GPU Fan2<td>0 RPM<td>0 RPM<td>0 RPM<td>
<tr><td><i class=v></i>GPU Power<td>59.809 W<td>58.129 W<td>61.083 W<td>59.711 W
<tr><td><i class=c></i>GPU Clock<td>1,650.0 MHz<td>1,650.0 MHz<td>1,650.0 MHz<td>1,650.0 MHz
<tr><td><i class=c></i>GPU Memory Clock<td>7,751.0 MHz<td>7,751.0 MHz<td>7,751.0 MHz<td>7,751.0 MHz
<tr><td><i class=c></i>GPU Video Clock<td>1,530.0 MHz<td>1,530.0 MHz<td>1,530.0 MHz<td>1,530.0 MHz
<tr><td><i class=c></i>GPU Core Load<td>4.0 %<td>1.0 %<td>10.0 %<td>
<tr><td><i class=c></i>GPU Memory Contr...<td>1.0 %<td>0.0 %<td>1.0 %<td>
<tr><td><i class=c></i>GPU Video Engine L...<td>0.0 %<td>0.0 %<td>0.0 %<td>
<tr><td><i class=c></i>GPU Bus Load<td>0.0 %<td>0.0 %<td>0.0 %<td>
<tr><td><i class=c></i>GPU Memory Usage<td>9.2 %<td>8.1 %<td>9.8 %<td>
<tr><td><i class=c></i>GPU D3D Usage<td>5.3 %<td>0.8 %<td>44.6 %<td>
<tr><td><i class=c></i>GPU Video Decode ...<td>0.0 %<td>0.0 %<td>0.0 %<td>
<tr><td><i class=c></i>GPU Video Encode ...<td>0.0 %<td>0.0 %<td>0.0 %<td>
<tr><td><i class=c></i>GPU Computing (Co...<td>0.0 %<td>0.0 %<td>0.0 %<td>
<tr><td><i class=c></i>GPU Computing (Co...<td>0.0 %<td>0.0 %<td>0.0 %<td>
<tr><td><i class=c></i>GPU VR Usage<td>0.0 %<td>0.0 %<td>0.0 %<td>
<tr><td><i class=f></i>GPU Fan1<td>0 %<td>0 %<td>0 %<td>
<tr><td><i class=f></i>GPU Fan2<td>0 %<td>0 %<td>0 %<td>
<tr><td><i class=c></i>Performance Limit - ...<td>No<td>No<td>No<td>
<tr><td><i class=c></i>Performance Limit - ...<td>No<td>No<td>No<td>
<tr><td><i class=c></i>Performance Limit - ...<td>No<td>No<td>No<td>
<tr><td><i class=c></i>Performance Limit - ...<td>Yes<td>Yes<td>Yes<td>
<tr><td><i class=c></i>Performance Limit - ...<td>No<td>No<td>No<td>
<tr><td><i class=c></i>Total GPU Power (n...<td>23.9 %<td>23.1 %<td>24.8 %<td>
<tr><td><i class=c></i>Total GPU Power (%...<td>23.9 %<td>23.1 %<td>24.8 %<td>
<tr><td><i class=c></i>GPU Memory Alloca...<td>752 MB<td>663 MB<td>805 MB<td>
<tr><td><i class=c></i>GPU D3D Memory D...<td>576 MB<td>487 MB<td>629 MB<td>
<tr><td><i class=c></i>GPU D3D Memory D...<td>94 MB<td>93 MB<td>154 MB<td>
<tr><td><i class=c></i>PCIe Link Speed<td>8.0 GT/s<td>8.0 GT/s<td>8.0 GT/s<td>
<tr><td>&nbsp;<td><td><td><td>
<tr class=h><td><i class=h></i>Network: Intel Wire...<td><td><td><td>
<tr><td><i class=c></i>Total DL<td>0 MB<td>0 MB<td>0 MB<td>
<tr><td><i class=c></i>Total UP<td>0 MB<td>0 MB<td>0 MB<td>
</tbody></table></div>
<div class="vs" style="left:409px"><span class="a" style="top:4px">▲</span><div class="th"></div><span class="a" style="top:935px">▼</span></div>
<div class="hs" style="width:431px"><span class="a" style="left:5px">&lt;</span><div class="th" style="left:18px;width:337px"></div><span class="a" style="left:396px">&gt;</span></div></div>

<div class="bot">
<div class="btn" style="left:0"><svg width="40" height="33" viewBox="0 0 40 33"><path d="M4 16 L11 10 L11 13 L18 13 L18 19 L11 19 L11 22 Z" fill="#2e8ee0" stroke="#dde" stroke-width=".6"/><path d="M36 16 L29 10 L29 13 L22 13 L22 19 L29 19 L29 22 Z" fill="#2e8ee0" stroke="#dde" stroke-width=".6"/></svg></div>
<div class="btn" style="left:44px"><svg width="40" height="33" viewBox="0 0 40 33"><path d="M20 16 L13 10 L13 13 L5 13 L5 19 L13 19 L13 22 Z" fill="#2e8ee0" stroke="#dde" stroke-width=".6"/><path d="M20 16 L27 10 L27 13 L35 13 L35 19 L27 19 L27 22 Z" fill="#2e8ee0" stroke="#dde" stroke-width=".6"/></svg></div>
<div class="btn" style="left:2258px"><svg width="40" height="33" viewBox="0 0 40 33"><path d="M5 5 L22 5 L22 16 L5 16 Z" fill="#2a86d8" stroke="#555"/><rect x="9" y="17" width="9" height="3" fill="#777"/><path d="M18 16 L35 16 L35 27 L18 27 Z" fill="#2a86d8" stroke="#555"/><rect x="22" y="28" width="9" height="3" fill="#777"/></svg></div>
<div style="position:absolute;left:2326px;top:19px;font-size:11px">0:05:35</div>
<div class="btn" style="left:2369px"><svg width="40" height="33" viewBox="0 0 40 33"><circle cx="20" cy="16.5" r="14" fill="#fff" stroke="#222" stroke-width="2"/><path d="M20 6 V17 H28" stroke="#111" stroke-width="2.5" fill="none"/></svg></div>
<div class="btn" style="left:2414px"><svg width="40" height="33" viewBox="0 0 40 33"><path d="M11 3 H25 L30 8 V30 H11 Z" fill="#fff" stroke="#999"/><path d="M14 11 H27 M14 15 H27 M14 19 H27 M14 23 H24" stroke="#bbb"/><path d="M26 20 H30 V24 H34 V28 H30 V32 H26 V28 H22 V24 H26 Z" fill="#7cc242"/></svg></div>
<div class="btn" style="left:2460px"><svg width="40" height="33" viewBox="0 0 40 33"><circle cx="20" cy="16.5" r="11" fill="none" stroke="#aaa" stroke-width="5" stroke-dasharray="4 3"/><circle cx="20" cy="16.5" r="8" fill="none" stroke="#bbb" stroke-width="4"/></svg></div>
<div class="btn" style="left:2507px"><svg width="40" height="33" viewBox="0 0 40 33"><path d="M10 6 L30 27 M30 6 L10 27" stroke="#2c8ad6" stroke-width="6"/></svg></div>
</div>
<div class="blk"></div>
</body></html>
